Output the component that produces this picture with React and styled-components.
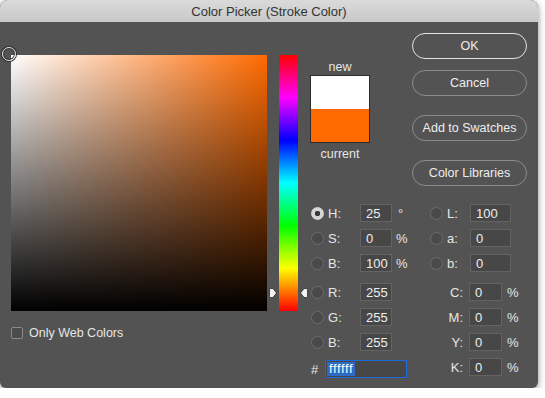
import React from 'react';
import styled, { createGlobalStyle } from 'styled-components';

const hue = 25;
const hueColor = '#ff6a00';

const GlobalStyle = createGlobalStyle`
    body {
        margin: 0;
        background: #ffffff;
        font-family: 'Liberation Sans', Arial, sans-serif;
    }
`;

const Window = styled.div`
    width: 538px;
    height: 388px;
    background-color: #535353;
    border-radius: 8px 8px 6px 6px;
    overflow: hidden;
    box-shadow: 0 2px 7px rgba(0, 0, 0, 0.45);
    display: flex;
    flex-direction: column;
`;

const TitleBar = styled.div`
    height: 22px;
    flex-shrink: 0;
    display: flex;
    align-items: center;
    justify-content: center;
    background: linear-gradient(#dadada, #c8c8c8);
    color: #333333;
    font-size: 13px;
`;

const Body = styled.div`
    display: flex;
    padding: 11px 0 0 11px;
    color: #e6e6e6;
    font-size: 12.5px;
`;

const LeftPane = styled.div`
    display: flex;
    flex-direction: column;
    padding-top: 22px;
`;

const PickerRow = styled.div`
    display: flex;
    align-items: flex-start;
`;

const Field = styled.div`
    position: relative;
    width: 256px;
    height: 256px;
    background:
        linear-gradient(to top, #000000, rgba(0, 0, 0, 0)),
        linear-gradient(to right, #ffffff, ${hueColor});
`;

const Marker = styled.div`
    position: absolute;
    left: -9px;
    top: -8px;
    width: 12px;
    height: 12px;
    border: 1.5px solid #e4e4e4;
    border-radius: 50%;
    box-shadow: 0 0 0 1px #2e2e2e, inset 0 0 0 1px #2e2e2e;
`;

const HueTrack = styled.div`
    position: relative;
    margin-left: 12px;
    width: 19px;
    height: 256px;
    background: linear-gradient(
        to bottom,
        #ff0000 0%,
        #ff00ff 16.67%,
        #0000ff 33.33%,
        #00ffff 50%,
        #00ff00 66.67%,
        #ffff00 83.33%,
        #ff0000 100%
    );
`;

const Pointer = styled.svg`
    position: absolute;
    width: 8px;
    height: 10px;
    margin-top: -5px;
    ${props => props.$side === 'left' ? 'left: -10px;' : 'right: -10px;'}
`;

const CheckRow = styled.label`
    display: flex;
    align-items: center;
    gap: 6px;
    margin-top: 15px;
    font-size: 12.5px;
`;

const Checkbox = styled.span`
    width: 10px;
    height: 10px;
    border: 1px solid #8a8a8a;
    border-radius: 2px;
    background-color: #4b4b4b;
`;

const RightPane = styled.div`
    margin-left: 12px;
    width: 217px;
    display: flex;
    flex-direction: column;
`;

const TopRow = styled.div`
    display: flex;
    justify-content: space-between;
    align-items: flex-start;
`;

const SwatchGroup = styled.div`
    width: 60px;
    margin-top: 27px;
    display: flex;
    flex-direction: column;
    align-items: center;
    line-height: 14px;
`;

const Swatch = styled.div`
    width: 58px;
    height: 66px;
    margin: 1px 0 4px;
    border: 1px solid #2c2c2c;
    background: linear-gradient(#ffffff 50%, ${hueColor} 50%);
`;

const Buttons = styled.div`
    width: 115px;
    display: flex;
    flex-direction: column;
`;

const Button = styled.button`
    height: 26px;
    margin-top: ${props => props.$gap}px;
    border: ${props => props.$primary ? '1.5px solid #e2e2e2' : '1px solid #8c8c8c'};
    border-radius: 13px;
    background: transparent;
    color: #eeeeee;
    font-family: 'Liberation Sans', Arial, sans-serif;
    font-size: 12.5px;
    padding: 0;
`;

const Fields = styled.div`
    display: flex;
    margin-top: 18px;
`;

const Column = styled.div`
    width: ${props => props.$width}px;
    display: flex;
    flex-direction: column;
    gap: 7px;
`;

const Row = styled.div`
    height: 18px;
    margin-top: ${props => props.$top || 0}px;
    display: flex;
    align-items: center;
    font-size: 13px;
`;

const Radio = styled.span`
    width: 11px;
    height: 11px;
    margin-left: 1px;
    border-radius: 50%;
    border: 1px solid ${props => props.$on ? '#d6d6d6' : '#6c6c6c'};
    background: ${props => props.$on
        ? 'radial-gradient(circle, #3a3a3a 0 2.5px, #d6d6d6 3px)'
        : '#4a4a4a'};
`;

const Label = styled.span`
    width: ${props => props.$width}px;
    padding-left: ${props => props.$right ? 0 : 4}px;
    padding-right: ${props => props.$right ? 6 : 0}px;
    text-align: ${props => props.$right ? 'right' : 'left'};
    box-sizing: border-box;
`;

const Input = styled.div`
    width: ${props => props.$width}px;
    height: 18px;
    box-sizing: border-box;
    padding-left: 5px;
    display: flex;
    align-items: center;
    background-color: #474747;
    border: 1px solid #636363;
    color: #eeeeee;
`;

const Unit = styled.span`
    margin-left: ${props => props.$gap || 4}px;
`;

const Hash = styled.span`
    width: 14px;
    padding-left: 1px;
`;

const HexInput = styled.div`
    width: 82px;
    height: 18px;
    box-sizing: border-box;
    padding-left: 1px;
    display: flex;
    align-items: center;
    background-color: #474747;
    border: 1.5px solid #1d6ad8;
`;

const Selected = styled.span`
    background-color: #2b6bc6;
    color: #ffffff;
    line-height: 14px;
    padding: 0 2px;
    letter-spacing: 0.6px;
`;

const hsb = [
    { key: 'H', value: '25', unit: '°', on: true },
    { key: 'S', value: '0', unit: '%' },
    { key: 'B', value: '100', unit: '%' },
];

const rgb = [
    { key: 'R', value: '255' },
    { key: 'G', value: '255' },
    { key: 'B', value: '255' },
];

const lab = [
    { key: 'L', value: '100' },
    { key: 'a', value: '0' },
    { key: 'b', value: '0' },
];

const cmyk = ['C', 'M', 'Y', 'K'];

const App = () => {
    const pointerTop = (1 - hue / 360) * 256;

    return (
        <>
            <GlobalStyle />
            <Window>
                <TitleBar>Color Picker (Stroke Color)</TitleBar>
                <Body>
                    <LeftPane>
                        <PickerRow>
                            <Field>
                                <Marker />
                            </Field>
                            <HueTrack>
                                <Pointer $side="left" viewBox="0 0 8 10" style={{ top: pointerTop }}>
                                    <path d="M0.5 1.5 Q0.5 0.5 1.5 0.5 H4 L7.5 5 L4 9.5 H1.5 Q0.5 9.5 0.5 8.5 Z" fill="#f2f2f2" stroke="#2a2a2a" strokeWidth="0.8" />
                                </Pointer>
                                <Pointer $side="right" viewBox="0 0 8 10" style={{ top: pointerTop }}>
                                    <path d="M7.5 1.5 Q7.5 0.5 6.5 0.5 H4 L0.5 5 L4 9.5 H6.5 Q7.5 9.5 7.5 8.5 Z" fill="#f2f2f2" stroke="#2a2a2a" strokeWidth="0.8" />
                                </Pointer>
                            </HueTrack>
                        </PickerRow>
                        <CheckRow>
                            <Checkbox />
                            Only Web Colors
                        </CheckRow>
                    </LeftPane>

                    <RightPane>
                        <TopRow>
                            <SwatchGroup>
                                <span>new</span>
                                <Swatch />
                                <span>current</span>
                            </SwatchGroup>
                            <Buttons>
                                <Button $primary $gap={0}>OK</Button>
                                <Button $gap={11}>Cancel</Button>
                                <Button $gap={19}>Add to Swatches</Button>
                                <Button $gap={19}>Color Libraries</Button>
                            </Buttons>
                        </TopRow>

                        <Fields>
                            <Column $width={119}>
                                {hsb.map(f => (
                                    <Row key={f.key}>
                                        <Radio $on={f.on} />
                                        <Label $width={36}>{f.key}:</Label>
                                        <Input $width={32}>{f.value}</Input>
                                        <Unit $gap={f.unit === '°' ? 6 : 4}>{f.unit}</Unit>
                                    </Row>
                                ))}
                                {rgb.map((f, i) => (
                                    <Row key={'rgb' + f.key} $top={i === 0 ? 4 : 0}>
                                        <Radio />
                                        <Label $width={36}>{f.key}:</Label>
                                        <Input $width={32}>{f.value}</Input>
                                    </Row>
                                ))}
                                <Row $top={2}>
                                    <Hash>#</Hash>
                                    <HexInput>
                                        <Selected>ffffff</Selected>
                                    </HexInput>
                                </Row>
                            </Column>

                            <Column $width={98}>
                                {lab.map(f => (
                                    <Row key={f.key}>
                                        <Radio />
                                        <Label $width={27}>{f.key}:</Label>
                                        <Input $width={41}>{f.value}</Input>
                                    </Row>
                                ))}
                                {cmyk.map((k, i) => (
                                    <Row key={k} $top={i === 0 ? 4 : 0}>
                                        <Label $right $width={40}>{k}:</Label>
                                        <Input $width={33}>0</Input>
                                        <Unit $gap={5}>%</Unit>
                                    </Row>
                                ))}
                            </Column>
                        </Fields>
                    </RightPane>
                </Body>
            </Window>
        </>
    );
};

export default App;
